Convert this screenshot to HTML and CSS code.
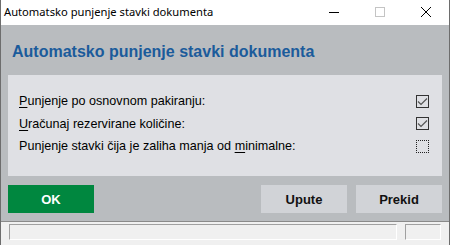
FILE: index.html
```html
<!DOCTYPE html>
<html lang="hr">
<head>
    <meta charset="UTF-8">
    <title>Automatsko punjenje stavki dokumenta</title>
    <link rel="stylesheet" href="styles.css">
</head>
<body>
    <div class="window">
        <div class="titlebar">
            <span class="title">Automatsko punjenje stavki dokumenta</span>
            <div class="controls">
                <span class="ctl">
                    <svg width="12" height="12" viewBox="0 0 12 12"><path d="M1 6.5h10" stroke="#000" stroke-width="1"/></svg>
                </span>
                <span class="ctl">
                    <svg width="12" height="12" viewBox="0 0 12 12"><rect x="1.5" y="1.5" width="9" height="9" fill="none" stroke="#c4c4c4"/></svg>
                </span>
                <span class="ctl">
                    <svg width="12" height="12" viewBox="0 0 12 12"><path d="M1 1L11 11M11 1L1 11" stroke="#000" stroke-width="1"/></svg>
                </span>
            </div>
        </div>

        <div class="body">
            <h1 class="heading">Automatsko punjenje stavki dokumenta</h1>

            <div class="panel">
                <div class="row">
                    <span class="label"><u>P</u>unjenje po osnovnom pakiranju:</span>
                    <span class="check checked">
                        <svg width="11" height="9" viewBox="0 0 11 9"><path d="M1 4.5L4 7.5L10 1.5" fill="none" stroke="#555" stroke-width="1.2"/></svg>
                    </span>
                </div>
                <div class="row">
                    <span class="label"><u>U</u>računaj rezervirane količine:</span>
                    <span class="check checked">
                        <svg width="11" height="9" viewBox="0 0 11 9"><path d="M1 4.5L4 7.5L10 1.5" fill="none" stroke="#555" stroke-width="1.2"/></svg>
                    </span>
                </div>
                <div class="row">
                    <span class="label">Punjenje stavki čija je zaliha manja od <u>m</u>inimalne:</span>
                    <span class="check focused"></span>
                </div>
            </div>

            <div class="buttons">
                <button class="btn btn-ok">OK</button>
                <div class="spacer"></div>
                <button class="btn">Upute</button>
                <button class="btn">Prekid</button>
            </div>
        </div>

        <div class="statusbar">
            <div class="cell cell-main"></div>
            <div class="cell cell-small"></div>
        </div>
    </div>
</body>
</html>
```

FILE: styles.css
```css
html, body {
    margin: 0;
    padding: 0;
}
body {
    width: 450px;
    height: 245px;
    overflow: hidden;
    background: #f0f0f0;
    font-family: 'Liberation Sans', Arial, sans-serif;
}
.window {
    width: 450px;
    height: 245px;
    box-sizing: border-box;
    border-left: 1px solid #6d6d6d;
    border-right: 1px solid #6d6d6d;
    display: flex;
    flex-direction: column;
}
.titlebar {
    height: 25px;
    background: #fff;
    display: flex;
    align-items: center;
    justify-content: space-between;
}
.title {
    font-family: 'Noto Sans', sans-serif;
    font-size: 11.2px;
    color: #000;
    padding-left: 3px;
    padding-bottom: 2px;
}
.controls {
    display: flex;
    height: 100%;
}
.ctl {
    width: 46px;
    display: flex;
    align-items: center;
    justify-content: center;
    padding-bottom: 1px;
}
.body {
    background: #b9bcbf;
    height: 196px;
    padding: 0 7px;
    display: flex;
    flex-direction: column;
}
.heading {
    margin: 0;
    padding: 17px 0 0 4px;
    height: 34px;
    box-sizing: border-box;
    color: #1b5b9b;
    font-size: 16px;
    font-weight: bold;
    line-height: 20px;
}
.panel {
    margin-top: 16px;
    height: 101px;
    background: #dfe0e4;
    box-sizing: border-box;
    padding: 15px 12px 0 11px;
}
.row {
    height: 22.5px;
    display: flex;
    align-items: center;
    justify-content: space-between;
    font-size: 12.6px;
    color: #000;
}
.label u {
    text-underline-offset: 2px;
}
.check {
    width: 13px;
    height: 13px;
    box-sizing: border-box;
    display: flex;
    align-items: center;
    justify-content: center;
    margin-right: 1px;
}
.check.checked {
    border: 1.5px solid #333;
}
.check.focused {
    border: 1px dotted #222;
}
.buttons {
    margin-top: 9px;
    display: flex;
    gap: 9px;
}
.spacer {
    flex: 1;
}
.btn {
    width: 86px;
    height: 28px;
    border: none;
    background: #d1d3d7;
    font-family: 'Liberation Sans', Arial, sans-serif;
    font-size: 13px;
    font-weight: bold;
    color: #111;
    padding: 0;
}
.btn-ok {
    background: #00873f;
    color: #fff;
}
.statusbar {
    flex: 1;
    border-top: 1px solid #8a8a8a;
    background: #f0f0f0;
    display: flex;
    padding: 2px 8px 0 8px;
    gap: 8px;
}
.cell {
    height: 16px;
    box-sizing: border-box;
    border: 1px solid #a0a0a0;
    border-right-color: #fff;
    border-bottom-color: #fff;
    background: #f0f0f0;
}
.cell-main {
    flex: 1;
}
.cell-small {
    width: 36px;
}
```
